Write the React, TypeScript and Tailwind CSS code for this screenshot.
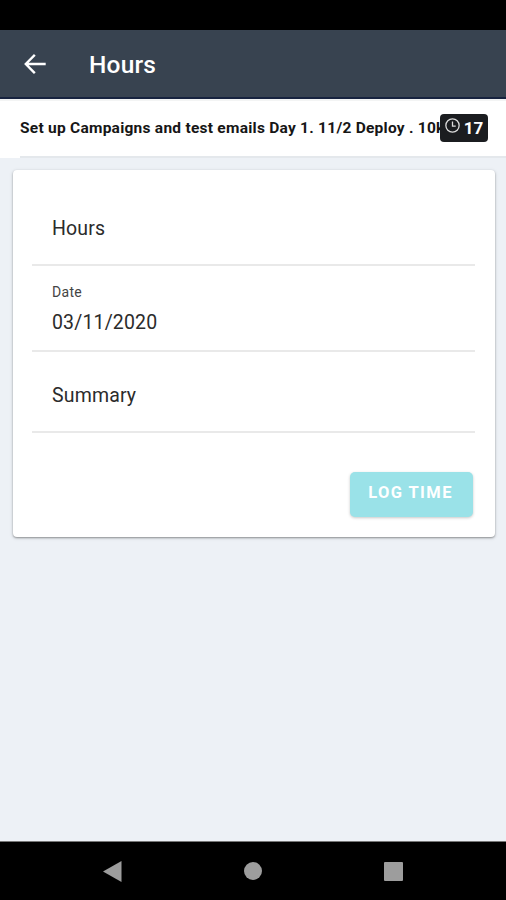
import type { ReactNode } from 'react'

interface FieldProps {
  children: ReactNode
  className?: string
}

// One row of the form, with its line at the bottom
function Field({ children, className = '' }: FieldProps) {
  return (
    <div className={`flex flex-col border-b-2 border-[#e9e9e9] pl-5 text-[#2b2b2b] ${className}`}>
      {children}
    </div>
  )
}

function Header() {
  return (
    <header className="flex h-[69px] shrink-0 items-center border-b-2 border-[#17233f] bg-[#384350] pl-6 text-white">
      <svg className="mt-px" width="22" height="20" viewBox="0 0 22 20" fill="none" stroke="currentColor" strokeWidth="2.4" strokeLinecap="square">
        <path d="M10 1.7 1.8 10 10 18.3M2.5 10H20.5" />
      </svg>
      <h1 className="ml-[43px] pt-0.5 text-[24.5px] leading-8 font-medium tracking-[0.2px]">Hours</h1>
    </header>
  )
}

function TaskBar() {
  return (
    <div className="flex h-[59px] shrink-0 border-t-2 border-[#f3f4f4] bg-white pl-5">
      <div className="flex min-w-0 flex-1 items-center border-b-2 border-[#e4e8ec] pr-[18px]">
        {/* The name runs under the badge, which keeps its own width */}
        <p className="min-w-0 flex-1 overflow-hidden text-[15.5px] font-bold tracking-[0.25px] whitespace-nowrap text-[#161616]">
          Set up Campaigns and test emails Day 1. 11/2 Deploy . 10k
        </p>
        <div className="mb-0.5 flex h-7 w-12 shrink-0 items-center justify-center gap-1 rounded bg-[#1b1d20] text-white">
          <svg className="mb-1" width="15" height="15" viewBox="0 0 14 14" fill="none" stroke="#dddddd" strokeWidth="1.2">
            <circle cx="7" cy="7" r="6.2" />
            <path d="M7 3.2V7.5H10" />
          </svg>
          <span className="text-[17px] leading-5 font-bold">17</span>
        </div>
      </div>
    </div>
  )
}

export default function App() {
  return (
    <div className="flex h-[900px] w-full max-w-[506px] flex-col overflow-hidden bg-[#edf1f6] font-['Roboto',sans-serif]">
      <div className="h-[30px] shrink-0 bg-black" />
      <Header />
      <TaskBar />

      <main className="flex-1 px-3 pt-3">
        <section className="ml-px h-[367px] w-[482px] rounded bg-white pr-5 pl-[19px] shadow-[0_1px_2px_rgba(0,0,0,0.35),0_1px_4px_rgba(0,0,0,0.12)]">
          <Field className="h-24 pt-[47px]">
            <label className="text-[19.5px] leading-6 tracking-[0.15px]">Hours</label>
          </Field>
          <Field className="h-[86px] pt-[18px]">
            <label className="text-[14px] leading-4 tracking-[0.3px] text-[#444444]">Date</label>
            <span className="mt-[11px] text-[19.5px] leading-6 tracking-[0.15px]">03/11/2020</span>
          </Field>
          <Field className="h-[81px] pt-8">
            <label className="text-[19.5px] leading-6 tracking-[0.15px]">Summary</label>
          </Field>
          <div className="mr-[2px] flex justify-end pt-[39px]">
            <button className="h-[45px] w-[123px] rounded-[5px] bg-[#9ae2e8] pr-0.5 pb-0.5 text-[16.5px] font-bold tracking-[1.4px] text-white shadow-[0_1px_3px_rgba(0,0,0,0.22)]">
              LOG TIME
            </button>
          </div>
        </section>
      </main>

      <nav className="flex h-[59px] shrink-0 items-center justify-between border-t border-[#777777] bg-black pr-[103px] pl-[103px]">
        <svg width="19" height="21" viewBox="0 0 19 21" fill="#9d9d9d">
          <path d="M0 10.5 18.5 0V21Z" />
        </svg>
        <div className="size-[18px] rounded-full bg-[#9d9d9d]" />
        <div className="size-[19px] rounded-[1px] bg-[#9d9d9d]" />
      </nav>
    </div>
  )
}
